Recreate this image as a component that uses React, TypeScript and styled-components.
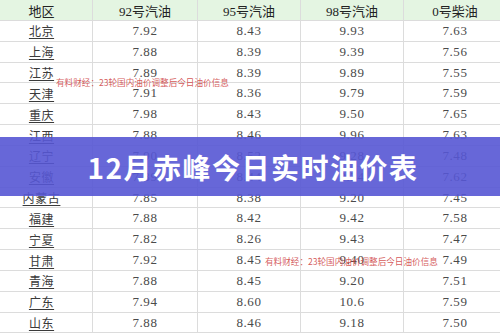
import React from "react";
import styled, { createGlobalStyle } from "styled-components";

const Global = createGlobalStyle`
  html, body { margin: 0; padding: 0; background: #fff; }
  body { overflow: hidden; }
`;

const Page = styled.div`
  position: relative;
  width: 500px;
  height: 333px;
  overflow: hidden;
  background: #fff;
`;

const Table = styled.div`
  margin-left: -9px;
  width: 516px;
  display: flex;
  flex-direction: column;
`;

const Row = styled.div<{ $header?: boolean }>`
  display: grid;
  grid-template-columns: 102px 105px 103px 103px 103px;
  height: ${(p) => (p.$header ? "21px" : "20.84px")};
  box-sizing: border-box;
  border-bottom: 1px solid #dcdcdc;
  background: ${(p) => (p.$header ? "#e4f5e2" : "#fff")};
`;

const Cell = styled.div<{ $header?: boolean }>`
  display: flex;
  align-items: center;
  justify-content: center;
  border-right: 1px solid #dcdcdc;
  font-family: "Liberation Serif", "Noto Sans CJK SC", serif;
  font-size: 13px;
  color: ${(p) => (p.$header ? "#222" : "#4a4a4a")};
  font-weight: 400;
  letter-spacing: ${(p) => (p.$header ? "0" : "0.6px")};
  white-space: nowrap;
`;

const Region = styled.span`
  font-family: "Noto Sans CJK SC", serif;
  font-size: 12px;
  color: #3a3a3a;
  text-decoration: underline;
  text-underline-offset: 2px;
`;

const Banner = styled.div`
  position: absolute;
  left: 0;
  right: 0;
  top: 137px;
  height: 59px;
  background: rgba(86, 86, 212, 0.9);
  display: flex;
  align-items: center;
  justify-content: center;
  color: #fff;
  font-family: "Noto Sans CJK SC", "Noto Sans", sans-serif;
  font-weight: 700;
  font-size: 28px;
  letter-spacing: 1.5px;
  padding-left: 6px;
`;

const Watermark = styled.div<{ $left: number; $top: number }>`
  position: absolute;
  left: ${(p) => p.$left}px;
  top: ${(p) => p.$top}px;
  font-family: "Noto Sans CJK SC", sans-serif;
  font-size: 8.6px;
  line-height: 10px;
  color: rgba(205, 60, 60, 0.85);
  white-space: nowrap;
`;

const headers = ["地区", "92号汽油", "95号汽油", "98号汽油", "0号柴油"];

const rows: string[][] = [
  ["北京", "7.92", "8.43", "9.93", "7.63"],
  ["上海", "7.88", "8.39", "9.39", "7.56"],
  ["江苏", "7.89", "8.39", "9.89", "7.55"],
  ["天津", "7.91", "8.36", "9.79", "7.59"],
  ["重庆", "7.98", "8.43", "9.50", "7.65"],
  ["江西", "7.88", "8.46", "9.96", "7.63"],
  ["辽宁", "7.90", "8.52", "9.28", "7.48"],
  ["安徽", "7.89", "8.44", "9.34", "7.62"],
  ["内蒙古", "7.85", "8.38", "9.20", "7.45"],
  ["福建", "7.88", "8.42", "9.42", "7.58"],
  ["宁夏", "7.82", "8.26", "9.43", "7.47"],
  ["甘肃", "7.92", "8.45", "9.40", "7.49"],
  ["青海", "7.88", "8.45", "9.20", "7.51"],
  ["广东", "7.94", "8.60", "10.6", "7.59"],
  ["山东", "7.88", "8.46", "9.18", "7.50"],
];

const wm = "有料财经：23轮国内油价调整后今日油价信息";

export default function App() {
  return (
    <Page>
      <Global />
      <Table>
        <Row $header>
          {headers.map((h) => (
            <Cell key={h} $header>
              {h}
            </Cell>
          ))}
        </Row>
        {rows.map((r) => (
          <Row key={r[0]}>
            <Cell>
              <Region>{r[0]}</Region>
            </Cell>
            {r.slice(1).map((v, i) => (
              <Cell key={i}>{v}</Cell>
            ))}
          </Row>
        ))}
      </Table>
      <Watermark $left={56} $top={77}>
        {wm}
      </Watermark>
      <Watermark $left={265} $top={256}>
        {wm}
      </Watermark>
      <Banner>12月赤峰今日实时油价表</Banner>
    </Page>
  );
}
